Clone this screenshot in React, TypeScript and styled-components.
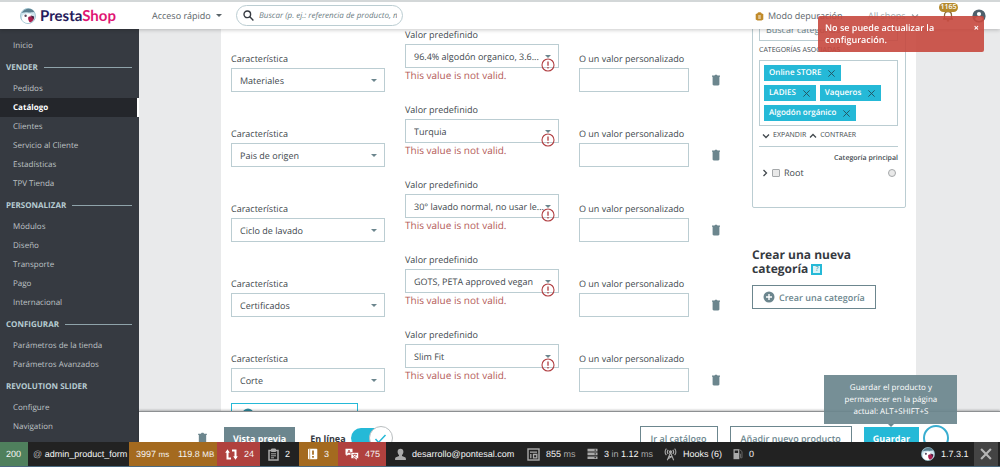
import React from "react";
import styled, { createGlobalStyle, css } from "styled-components";

const c = {
  line: "#bbcdd2",
  text: "#42494e",
  slate: "#6c868e",
  cyan: "#25b9d7",
  danger: "#b45c59",
};

const Global = createGlobalStyle`
  *, *::before, *::after { box-sizing: border-box; }
  html, body { margin: 0; height: 100%; }
  body { font-family: "Open Sans", "Noto Sans", sans-serif; font-size: 9px; color: ${c.text}; background: #fff; text-rendering: geometricPrecision; }
  button, input, select { font-family: inherit; margin: 0; text-rendering: inherit; }
  button { cursor: pointer; }
  svg { display: block; flex: none; }
  a { color: inherit; text-decoration: none; }
`;

const Shell = styled.div`
  height: 100vh;
  display: flex;
  flex-direction: column;
  overflow: hidden;
`;

/* ---------- header ---------- */

const Header = styled.header`
  position: relative;
  z-index: 2;
  flex: none;
  height: 29px;
  display: flex;
  align-items: center;
  padding: 0 14px 0 20px;
  background: #fff;
  border-top: 2px solid #d3d7d8;
  box-shadow: 0 1px 4px rgba(0, 0, 0, 0.22);
`;

const Logo = styled.a`
  display: flex;
  align-items: center;
  gap: 4px;
  width: 132px;
  font-family: Lato, "Open Sans", sans-serif;
  font-size: 15px;
  font-weight: 700;
  line-height: 20px;
  color: #251b5b;
`;

const LogoAccent = styled.span`
  color: #df1574;
`;

const QuickAccess = styled.button`
  display: flex;
  align-items: center;
  gap: 5px;
  width: 84px;
  padding: 0;
  border: 0;
  background: none;
  font-size: 9px;
  line-height: 16px;
  white-space: nowrap;
  color: #5a6368;
`;

const Caret = styled.span`
  border: 3px solid transparent;
  border-top-color: currentColor;
  border-bottom: 0;
`;

const SearchBox = styled.label`
  display: flex;
  align-items: center;
  gap: 5px;
  width: 167px;
  height: 21px;
  padding: 0 5px 0 6px;
  border: 1px solid ${c.line};
  border-radius: 11px;
  color: #363a41;
`;

const SearchInput = styled.input`
  flex: 1;
  min-width: 0;
  padding: 0;
  border: 0;
  outline: 0;
  background: none;
  font-size: 8px;
  font-style: italic;
  &::placeholder { color: #6c7d84; opacity: 1; }
`;

const HeaderTools = styled.div`
  margin-left: auto;
  display: flex;
  align-items: center;
`;

const DebugMode = styled.a`
  display: flex;
  align-items: center;
  gap: 4px;
  width: 113px;
  font-size: 9px;
  white-space: nowrap;
  color: #5a6368;
`;

const ShopPicker = styled.button`
  display: flex;
  align-items: center;
  gap: 5px;
  width: 74px;
  padding: 0;
  border: 0;
  background: none;
  font-size: 9px;
  white-space: nowrap;
  color: #9aa5aa;
`;

const IconButton = styled.button`
  position: relative;
  padding: 0;
  border: 0;
  background: none;
  color: inherit;
`;

const BellButton = styled(IconButton)`
  margin-right: 18px;
  color: #8b6a3b;
`;

const Badge = styled.span`
  position: absolute;
  left: -3px;
  top: -7px;
  width: 19px;
  border-radius: 5px;
  background: #b58a2c;
  color: #fff;
  font-size: 7px;
  font-weight: 600;
  line-height: 9px;
  text-align: center;
`;

const Toast = styled.div`
  position: fixed;
  z-index: 5;
  top: 16px;
  right: 16px;
  width: 166px;
  display: flex;
  align-items: flex-start;
  justify-content: space-between;
  padding: 6px 5px 6px 7px;
  border-radius: 2px;
  background: rgba(199, 72, 62, 0.9);
  color: #fff;
  font-size: 9px;
  font-weight: 600;
  line-height: 12px;
`;

const ToastText = styled.span`
  max-width: 120px;
`;

const ToastClose = styled.button`
  padding: 0;
  border: 0;
  background: none;
  color: #fff;
  font-size: 9px;
  font-weight: 700;
  line-height: 12px;
`;

/* ---------- sidebar ---------- */

const Body = styled.div`
  flex: 1;
  min-height: 0;
  display: flex;
`;

const Sidebar = styled.nav`
  flex: none;
  width: 139px;
  padding-top: 7px;
  overflow: hidden;
  background: #363a41;
`;

const MenuHeading = styled.div<{ $ruled?: boolean }>`
  display: flex;
  align-items: center;
  gap: 6px;
  height: 24px;
  padding: 0 7px 0 6px;
  color: #b7ccd2;
  font-size: 8px;
  font-weight: 700;
  white-space: nowrap;
  ${(p) => p.$ruled && css`
    &::after { content: ""; flex: 1; height: 1px; background: #8fa3aa; }
  `}
`;

const MenuLink = styled.a<{ $active?: boolean }>`
  display: block;
  height: 19px;
  padding-left: 13px;
  border-right: 2px solid transparent;
  color: #bfc3c6;
  font-size: 8px;
  line-height: 19px;
  white-space: nowrap;
  ${(p) => p.$active && css`
    border-right-color: #fff;
    background: #24262b;
    color: #fff;
    font-weight: 700;
  `}
`;

/* ---------- page ---------- */

const Main = styled.main`
  flex: 1;
  min-width: 0;
  display: flex;
  flex-direction: column;
  background: #e9eaeb;
`;

const Viewport = styled.div`
  flex: 1;
  min-height: 0;
  display: flex;
  overflow: hidden;
  padding: 0 84px 0 82px;
`;

const Panel = styled.div`
  flex: 1;
  min-width: 0;
  display: flex;
  align-items: flex-start;
  gap: 29px;
  min-height: 100%;
  padding: 0 10px;
  background: #fff;
`;

const Features = styled.form`
  flex: 1;
  min-width: 0;
  display: grid;
  gap: 11px;
  margin-top: -1px;
`;

const FeatureRow = styled.div`
  display: grid;
  grid-template-columns: 154fr 154fr 110fr 14px;
  column-gap: 20px;
  align-items: end;
  height: 64px;
`;

const Field = styled.div<{ $top?: boolean }>`
  min-width: 0;
  align-self: ${(p) => (p.$top ? "start" : "end")};
`;

const Label = styled.label`
  display: block;
  margin-bottom: 2px;
  font-size: 9px;
  line-height: 14px;
  white-space: nowrap;
`;

const boxed = css`
  display: block;
  width: 100%;
  height: 24px;
  border: 1px solid ${c.line};
  border-radius: 0;
  background: #fff;
  color: ${c.text};
  font-size: 9px;
  outline: 0;
`;

const SelectWrap = styled.div`
  position: relative;
  &::after {
    content: "";
    position: absolute;
    right: 8px;
    top: 11px;
    border: 3px solid transparent;
    border-top-color: ${c.slate};
    border-bottom: 0;
    pointer-events: none;
  }
`;

const Select = styled.select`
  ${boxed}
  appearance: none;
  padding: 0 6px 0 8px;
`;

const TextInput = styled.input`
  ${boxed}
  padding: 0 6px;
`;

const InvalidMark = styled.span`
  position: absolute;
  z-index: 1;
  right: 4px;
  top: 14px;
  color: #b03f42;
`;

const ErrorText = styled.div`
  font-size: 10px;
  line-height: 14px;
  color: ${c.danger};
  white-space: nowrap;
`;

const TrashButton = styled(IconButton)`
  display: flex;
  align-items: center;
  justify-content: center;
  height: 24px;
  color: ${c.slate};
`;

const OutlineButton = styled.button<{ $tone?: "cyan" }>`
  display: flex;
  align-items: center;
  justify-content: center;
  gap: 4px;
  height: 24px;
  padding: 0 10px;
  border: 1px solid ${(p) => (p.$tone ? c.cyan : c.slate)};
  background: #fff;
  color: ${(p) => (p.$tone ? "#2f8da1" : c.slate)};
  font-size: 9px;
  font-weight: 600;
  white-space: nowrap;
`;

const AddFeature = styled(OutlineButton)`
  justify-self: start;
  width: 127px;
  height: 22px;
`;

const Aside = styled.aside`
  flex: none;
  width: 154px;
  margin-top: -20px;
`;

const Card = styled.section`
  display: flex;
  flex-direction: column;
  height: 199px;
  padding: 7px 7px 0 6px;
  border: 1px solid ${c.line};
  border-radius: 2px;
`;

const CategorySearch = styled(TextInput)`
  flex: none;
  font-size: 9px;
  &::placeholder { color: ${c.slate}; opacity: 1; }
`;

const Caption = styled.h2`
  margin: 4px 0 3px;
  font-size: 7px;
  font-weight: 400;
  line-height: 12px;
  white-space: nowrap;
`;

const Tags = styled.ul`
  display: flex;
  flex-wrap: wrap;
  align-content: flex-start;
  gap: 4px;
  height: 66px;
  margin: 0;
  padding: 4px;
  border: 1px solid ${c.line};
  list-style: none;
`;

const Tag = styled.li`
  display: flex;
  align-items: center;
  gap: 6px;
  height: 16px;
  padding: 0 5px;
  background: ${c.cyan};
  color: #fff;
  font-size: 8px;
  font-weight: 600;
  line-height: 16px;
  white-space: nowrap;
`;

const TagClose = styled(IconButton)`
  color: #24505c;
`;

const TreeTools = styled.div`
  display: flex;
  align-items: center;
  gap: 3px;
  height: 21px;
  padding-left: 3px;
  border-bottom: 1px solid ${c.line};
`;

const TreeTool = styled.button`
  display: flex;
  align-items: center;
  gap: 3px;
  padding: 0;
  border: 0;
  background: none;
  color: ${c.text};
  font-size: 7px;
  line-height: 12px;
`;

const MainCategory = styled.div`
  margin-top: 5px;
  font-size: 7px;
  font-weight: 600;
  line-height: 14px;
  text-align: right;
`;

const TreeRow = styled.div`
  display: flex;
  align-items: center;
  gap: 3px;
  height: 14px;
  padding: 0 2px 0 2px;
`;

const TreeLabel = styled.label`
  flex: 1;
  display: flex;
  align-items: center;
  gap: 4px;
  font-size: 9px;
  line-height: 14px;
`;

const Tick = styled.input<{ $round?: boolean }>`
  appearance: none;
  width: 8px;
  height: 8px;
  border: 1px solid #a5a8aa;
  border-radius: ${(p) => (p.$round ? "50%" : "1px")};
  background: #e9e9e9;
`;

const NewCategory = styled.h2`
  display: block;
  margin: 40px 0 9px;
  color: #363a41;
  font-size: 12px;
  font-weight: 700;
  line-height: 14px;
`;

const Help = styled.button`
  display: inline-block;
  width: 11px;
  height: 11px;
  padding: 0;
  border: 2px solid ${c.cyan};
  background: #d9f3f8;
  color: #2f8da1;
  font-size: 7px;
  line-height: 7px;
  vertical-align: middle;
`;

/* ---------- action bar ---------- */

const ActionBar = styled.footer`
  position: relative;
  z-index: 1;
  flex: none;
  display: flex;
  align-items: flex-start;
  justify-content: space-between;
  height: 31px;
  padding: 15px 51px 0 57px;
  border-top: 1px solid #8d9092;
  background: #fff;
  box-shadow: 0 -1px 2px rgba(0, 0, 0, 0.25);
`;

const ActionGroup = styled.div<{ $gap: number }>`
  display: flex;
  align-items: center;
  gap: ${(p) => p.$gap}px;
  height: 22px;
  color: ${c.slate};
`;

const SolidButton = styled.button<{ $color: string }>`
  height: 22px;
  padding: 0 9px;
  border: 0;
  background: ${(p) => p.$color};
  color: #fff;
  font-size: 9px;
  font-weight: 700;
  white-space: nowrap;
`;

const OnlineLabel = styled.label`
  display: flex;
  align-items: center;
  gap: 5px;
  color: #363a41;
  font-size: 9px;
  font-weight: 700;
`;

const SwitchInput = styled.input`
  appearance: none;
  position: relative;
  width: 34px;
  height: 20px;
  margin: 0;
  border-radius: 10px;
  background: ${c.cyan};
`;

const SwitchWrap = styled.span`
  position: relative;
  display: flex;
  width: 42px;
`;

const Knob = styled.span`
  position: absolute;
  right: 0;
  top: -2px;
  display: flex;
  align-items: center;
  justify-content: center;
  width: 24px;
  height: 24px;
  border: 1px solid #b9bec0;
  border-radius: 50%;
  background: #fff;
  color: ${c.cyan};
`;

const SaveSlot = styled.span`
  position: relative;
  display: flex;
`;

const Tooltip = styled.div`
  position: absolute;
  z-index: 3;
  left: 50%;
  bottom: 25px;
  width: 133px;
  margin-left: -67px;
  padding: 7px 16px 6px;
  background: rgba(108, 134, 142, 0.93);
  color: #fff;
  font-size: 8px;
  line-height: 12px;
  text-align: center;
  &::after {
    content: "";
    position: absolute;
    left: 50%;
    top: 100%;
    margin-left: -3px;
    border: 3px solid transparent;
    border-top-color: ${c.slate};
    border-bottom: 0;
  }
`;

const Spinner = styled.span`
  width: 26px;
  height: 26px;
  margin-left: -8px;
  border: 2px solid #3aaed0;
  border-radius: 50%;
`;

/* ---------- debug toolbar ---------- */

const DebugBar = styled.div`
  position: relative;
  z-index: 4;
  flex: none;
  display: flex;
  height: 24px;
  padding-right: 2px;
  background: #222;
  color: #f5f5f5;
  font-family: "Liberation Sans", Arial, sans-serif;
  font-size: 9px;
  line-height: 24px;
  white-space: nowrap;
`;

const Block = styled.div<{ $bg?: string; $w: number; $pad?: number }>`
  flex: none;
  display: flex;
  align-items: center;
  gap: 6px;
  width: ${(p) => p.$w}px;
  padding-left: ${(p) => p.$pad ?? 8}px;
  background: ${(p) => p.$bg ?? "transparent"};
`;

const Unit = styled.span`
  color: #aaa;
`;

const Muted = styled.span`
  font-size: 8px;
`;

const DebugEnd = styled.div`
  margin-left: auto;
  display: flex;
`;

const CloseBar = styled.button`
  display: flex;
  align-items: center;
  justify-content: center;
  width: 24px;
  padding: 0;
  border: 0;
  background: #444;
  color: #b5b5b5;
`;

const Strip = styled.div`
  flex: none;
  height: 1px;
  background: #4b6a80;
`;

/* ---------- icons ---------- */

const Mascot = ({ size }: { size: number }) => (
  <svg width={size} height={size} viewBox="0 0 16 16" aria-hidden="true">
    <circle cx="8" cy="8" r="7.5" fill="#cfe6ee" stroke="#8fb9c6" strokeWidth=".8" />
    <path d="M1.800 5C3.500 1.800 6 .8 8.500.8c2.500 0 4.700 1.200 5.800 3.200-2.500.200-4 .6-6 .4-2.500-.2-4.500-.2-6.500.6z" fill="#5b7f8f" />
    <path d="M2.200 12C1.500 8.500 3 6 6.500 5.600c3.500-.4 6 1 6.800 4.400-.5 3-2.600 5-5.300 5-2.500 0-4.600-1-5.800-3z" fill="#fff" />
    <circle cx="5.600" cy="7.800" r="1.200" fill="#574d60" />
    <path d="M8.300 9c1.700-1.300 4.300-.8 5.700.6-.3 2.500-1.700 4.300-3.900 5C8.500 13.200 7.800 11 8.300 9z" fill="#a8204f" />
    <path d="M10.500 7.200l3.600 1.400-.6 2.800z" fill="#4a2040" />
  </svg>
);

const Trash = ({ size = 12 }: { size?: number }) => (
  <svg width={size} height={size} viewBox="0 0 12 12" fill="currentColor" aria-hidden="true">
    <path d="M2 1.500h2.500l.7-.8h1.600l.7.8H10v1.300H2zM2.600 2.600h6.800v7.600c0 .7-.5 1.200-1.200 1.200H3.800c-.7 0-1.200-.5-1.200-1.200z" />
  </svg>
);

const Alert = () => (
  <svg width="14" height="14" viewBox="0 0 14 14" fill="none" stroke="currentColor" aria-hidden="true">
    <circle cx="7" cy="7" r="6" strokeWidth="1.100" />
    <path d="M7 3.500v4.300M7 9v1.400" strokeWidth="1.300" />
  </svg>
);

const Cross = ({ size, weight = 1 }: { size: number; weight?: number }) => (
  <svg width={size} height={size} viewBox="0 0 10 10" stroke="currentColor" strokeWidth={weight} aria-hidden="true">
    <path d="M1.500 1.500l7 7M8.500 1.500l-7 7" />
  </svg>
);

const Chevron = ({ dir }: { dir: "down" | "up" | "right" }) => (
  <svg width="8" height="8" viewBox="0 0 8 8" fill="none" stroke="currentColor" strokeWidth="1.300" aria-hidden="true">
    <path d={{ down: "M1 2.500l3 3 3-3", up: "M1 5.500l3-3 3 3", right: "M2.500 1l3 3-3 3" }[dir]} />
  </svg>
);

const Plus = () => (
  <svg width="12" height="12" viewBox="0 0 12 12" aria-hidden="true">
    <circle cx="6" cy="6" r="5.500" fill="currentColor" />
    <path d="M6 3v6M3 6h6" stroke="#fff" strokeWidth="1.400" />
  </svg>
);

const Magnifier = () => (
  <svg width="11" height="11" viewBox="0 0 11 11" fill="none" stroke="currentColor" strokeWidth="1.400" aria-hidden="true">
    <circle cx="4.300" cy="4.300" r="3.300" />
    <path d="M6.800 6.800l3.600 3.600" />
  </svg>
);

const Bug = () => (
  <svg width="9" height="10" viewBox="0 0 9 10" aria-hidden="true">
    <path d="M2.300 2.600C2.500.8 6.500.8 6.700 2.600L8.300 3v5.500L6.500 9.500h-4L.7 8.500V3z" fill="#c08a2a" />
    <path d="M3.200 5h2.600M3.200 7h2.600" stroke="#fff" />
  </svg>
);

const Bell = () => (
  <svg width="12" height="12" viewBox="0 0 12 12" fill="none" stroke="currentColor" strokeWidth="1.300" aria-hidden="true">
    <path d="M2.500 8.800V5.200C2.500 3 4 1.500 6 1.500S9.500 3 9.500 5.200v3.600M1 9h10" />
    <path d="M4.800 10.800h2.400" />
  </svg>
);

const Account = () => (
  <svg width="14" height="14" viewBox="0 0 14 14" aria-hidden="true">
    <circle cx="7" cy="7" r="6.600" fill="#4f5f6b" />
    <circle cx="7" cy="5" r="2.100" fill="#fff" />
    <path d="M3 10c.8-1.700 2.200-2.300 4-2.300s3.200.6 4 2.300c-1 1.300-2.400 2-4 2s-3-.7-4-2z" fill="#fff" />
  </svg>
);

const Swap = () => (
  <svg width="13" height="13" viewBox="0 0 13 13" fill="none" stroke="#fff" strokeWidth="2" aria-hidden="true">
    <path d="M6 10.500H2.500V3M7 2.500h3.500V10" />
    <path d="M.2 4.800L2.500 1.200 4.800 4.800zM8.200 8.200l2.300 3.600 2.300-3.600z" fill="#fff" stroke="none" />
  </svg>
);

const Clipboard = () => (
  <svg width="11" height="13" viewBox="0 0 11 13" fill="none" stroke="#aaa" aria-hidden="true">
    <path d="M1 2.500h9v9.500H1z" strokeWidth="1.500" />
    <path d="M3.500 1h4v2.500h-4z" fill="#aaa" />
    <path d="M3 5.800h5M3 7.800h5M3 9.800h3" />
  </svg>
);

const LogMark = () => (
  <svg width="11" height="12" viewBox="0 0 11 12" aria-hidden="true">
    <path d="M1 1.500C1 1 1.300.7 1.800.7H9.500c.5 0 .8.300.8.800v9c0 .5-.3.800-.8.800H1.800c-.5 0-.8-.3-.8-.8z" fill="#fff" />
    <path d="M6 2.400v4.300M6 8v1.700" stroke="#a46a1f" strokeWidth="1.700" />
    <path d="M2.700 1v10" stroke="#a46a1f" strokeWidth=".6" />
  </svg>
);

const Translate = () => (
  <svg width="14" height="13" viewBox="0 0 14 13" aria-hidden="true">
    <path d="M.5.800h7v6H3L1.500 8.300V6.800h-1z" fill="#fff" />
    <path d="M2.500 5.300L4 2l1.500 3.300M3 4.300h2" stroke="#b0413e" fill="none" strokeWidth=".8" />
    <path d="M6 4.500h7.500v6h-1.500v2l-2-2H6z" fill="#fff" stroke="#b0413e" strokeWidth=".6" />
    <path d="M7.500 6.500H12M9.800 5.500v1M8 9.500c2-.6 3-1.500 3.300-3M8.300 7c.5 1.300 1.800 2.200 3.200 2.500" stroke="#b0413e" fill="none" strokeWidth=".7" />
  </svg>
);

const Person = () => (
  <svg width="11" height="13" viewBox="0 0 11 13" fill="#aaa" aria-hidden="true">
    <path d="M5.500.800c1.900 0 2.900 1.300 2.900 3 0 1.300-.6 2.600-1.400 3.200v1l3 1.200c.6.300.9.800.9 1.500v1.300H.1v-1.300c0-.7.3-1.200.9-1.500L4 8V7c-.8-.6-1.400-1.900-1.400-3.200 0-1.700 1-3 2.900-3z" />
  </svg>
);

const TemplateIcon = () => (
  <svg width="13" height="13" viewBox="0 0 13 13" fill="none" stroke="#aaa" aria-hidden="true">
    <rect x="1" y="1" width="11" height="11" strokeWidth="1.400" />
    <path d="M3 4.200h7M3.800 6v4.200M6.500 6.500h3.300v3.300H6.500z" strokeWidth="1.300" />
  </svg>
);

const Database = () => (
  <svg width="11" height="12" viewBox="0 0 11 12" aria-hidden="true">
    <path d="M.5.800h10v2.700H.5zM.5 4.600h10v2.700H.5zM.5 8.400h10v2.700H.5z" fill="#aaa" />
    <path d="M7.500 2.100H9M7.500 5.900H9M7.500 9.700H9" stroke="#222" />
  </svg>
);

const Antenna = () => (
  <svg width="13" height="13" viewBox="0 0 13 13" fill="none" stroke="#aaa" strokeWidth="1.100" aria-hidden="true">
    <path d="M6.500 4.500L3.300 12.300M6.500 4.500l3.200 7.800M5 8.500h3M4 10.800l4-2.300" />
    <circle cx="6.500" cy="3.800" r="1" fill="#aaa" />
    <path d="M4.200 1.800c-1 1.200-1 3 0 4.200M8.800 1.800c1 1.200 1 3 0 4.200M2.400.600C.7 2.400.7 5.400 2.400 7.200M10.600.600c1.700 1.800 1.700 4.800 0 6.600" />
  </svg>
);

const Pump = () => (
  <svg width="10" height="12" viewBox="0 0 10 12" aria-hidden="true">
    <path d="M.5 1.200h5.800v10H.5z" fill="#aaa" />
    <path d="M1.700 2.500h3.400V5H1.700z" fill="#222" />
    <path d="M6.500 1.500L9 3.500v6.300H7.500V6H6.300" fill="none" stroke="#666" />
  </svg>
);

/* ---------- data ---------- */

const menu = [
  { title: "VENDER", ruled: true, items: ["Pedidos", "Catálogo", "Clientes", "Servicio al Cliente", "Estadísticas", "TPV Tienda"] },
  { title: "PERSONALIZAR", ruled: true, items: ["Módulos", "Diseño", "Transporte", "Pago", "Internacional"] },
  { title: "CONFIGURAR", ruled: true, items: ["Parámetros de la tienda", "Parámetros Avanzados"] },
  { title: "REVOLUTION SLIDER", ruled: false, items: ["Configure", "Navigation"] },
];

const features = [
  ["Materiales", "96.4% algodón organico, 3.6..."],
  ["Pais de origen", "Turquia"],
  ["Ciclo de lavado", "30° lavado normal, no usar le..."],
  ["Certificados", "GOTS, PETA approved vegan"],
  ["Corte", "Slim Fit"],
];

const tags = ["Online STORE", "LADIES", "Vaqueros", "Algodón orgánico"];

export default function App() {
  return (
    <Shell>
      <Global />
      <Header>
        <Logo href="#">
          <Mascot size={16} />
          <span>Presta<LogoAccent>Shop</LogoAccent></span>
        </Logo>
        <QuickAccess type="button">Acceso rápido <Caret /></QuickAccess>
        <SearchBox>
          <Magnifier />
          <SearchInput aria-label="Buscar" placeholder="Buscar (p. ej.: referencia de producto, nombre)" />
        </SearchBox>
        <HeaderTools>
          <DebugMode href="#"><Bug /> Modo depuración</DebugMode>
          <ShopPicker type="button">All shops <Chevron dir="down" /></ShopPicker>
          <BellButton type="button" aria-label="Notificaciones">
            <Bell />
            <Badge>1165</Badge>
          </BellButton>
          <IconButton type="button" aria-label="Cuenta"><Account /></IconButton>
        </HeaderTools>
      </Header>
      <Toast role="alert">
        <ToastText>No se puede actualizar la configuración.</ToastText>
        <ToastClose type="button" aria-label="Cerrar">×</ToastClose>
      </Toast>

      <Body>
        <Sidebar>
          <MenuLink href="#">Inicio</MenuLink>
          {menu.map((s) => (
            <React.Fragment key={s.title}>
              <MenuHeading $ruled={s.ruled}>{s.title}</MenuHeading>
              {s.items.map((i) => (
                <MenuLink key={i} href="#" $active={i === "Catálogo"}>{i}</MenuLink>
              ))}
            </React.Fragment>
          ))}
        </Sidebar>

        <Main>
          <Viewport>
            <Panel>
              <Features>
                {features.map(([name, value], n) => (
                  <FeatureRow key={name}>
                    <Field>
                      <Label htmlFor={`feature-${n}`}>Característica</Label>
                      <SelectWrap>
                        <Select id={`feature-${n}`}><option>{name}</option></Select>
                      </SelectWrap>
                    </Field>
                    <Field $top>
                      <Label htmlFor={`value-${n}`}>Valor predefinido</Label>
                      <SelectWrap>
                        <Select id={`value-${n}`}><option>{value}</option></Select>
                        <InvalidMark><Alert /></InvalidMark>
                      </SelectWrap>
                      <ErrorText>This value is not valid.</ErrorText>
                    </Field>
                    <Field>
                      <Label htmlFor={`custom-${n}`}>O un valor personalizado</Label>
                      <TextInput id={`custom-${n}`} />
                    </Field>
                    <TrashButton type="button" aria-label="Eliminar"><Trash /></TrashButton>
                  </FeatureRow>
                ))}
                <AddFeature type="button" $tone="cyan"><Plus /> Añadir característica</AddFeature>
              </Features>

              <Aside>
                <Card>
                  <CategorySearch aria-label="Buscar categorías" placeholder="Buscar categorías" />
                  <Caption>CATEGORÍAS ASOCIADAS</Caption>
                  <Tags>
                    {tags.map((t) => (
                      <Tag key={t}>
                        {t}
                        <TagClose type="button" aria-label={`Quitar ${t}`}><Cross size={9} /></TagClose>
                      </Tag>
                    ))}
                  </Tags>
                  <TreeTools>
                    <TreeTool type="button"><Chevron dir="down" /> EXPANDIR</TreeTool>
                    <TreeTool type="button"><Chevron dir="up" /> CONTRAER</TreeTool>
                  </TreeTools>
                  <MainCategory>Categoría principal</MainCategory>
                  <TreeRow>
                    <Chevron dir="right" />
                    <TreeLabel><Tick type="checkbox" /> Root</TreeLabel>
                    <Tick type="radio" $round aria-label="Root como categoría principal" />
                  </TreeRow>
                </Card>
                <NewCategory>
                  Crear una nueva categoría <Help type="button" aria-label="Ayuda">?</Help>
                </NewCategory>
                <OutlineButton type="button"><Plus /> Crear una categoría</OutlineButton>
              </Aside>
            </Panel>
          </Viewport>

          <ActionBar>
            <ActionGroup $gap={15}>
              <IconButton type="button" aria-label="Eliminar producto"><Trash size={13} /></IconButton>
              <SolidButton type="button" $color={c.slate}>Vista previa</SolidButton>
              <OnlineLabel>
                En línea
                <SwitchWrap>
                  <SwitchInput type="checkbox" role="switch" defaultChecked />
                  <Knob>
                    <svg width="13" height="13" viewBox="0 0 13 13" fill="none" stroke="currentColor" strokeWidth="1.500" aria-hidden="true">
                      <path d="M1.500 7l3 3.500L11.500 3" />
                    </svg>
                  </Knob>
                </SwitchWrap>
              </OnlineLabel>
            </ActionGroup>
            <ActionGroup $gap={12}>
              <OutlineButton type="button">Ir al catálogo</OutlineButton>
              <OutlineButton type="button">Añadir nuevo producto</OutlineButton>
              <SaveSlot>
                <SolidButton type="button" $color={c.cyan}>Guardar</SolidButton>
                <Tooltip role="tooltip">Guardar el producto y permanecer en la página actual: ALT+SHIFT+S</Tooltip>
              </SaveSlot>
              <Spinner />
            </ActionGroup>
          </ActionBar>
        </Main>
      </Body>

      <DebugBar>
        <Block $w={28} $pad={6} $bg="#4f805d">200</Block>
        <Block $w={101} $pad={5}><span><Unit>@</Unit> admin_product_form</span></Block>
        <Block $w={42} $pad={7} $bg="#a46a1f"><span>3997 <Muted>ms</Muted></span></Block>
        <Block $w={46} $pad={7} $bg="#a46a1f"><span>119.8 <Muted>MB</Muted></span></Block>
        <Block $w={43} $bg="#b0413e"><Swap />24</Block>
        <Block $w={39}><Clipboard />2</Block>
        <Block $w={39} $bg="#a46a1f"><LogMark />3</Block>
        <Block $w={48} $pad={7} $bg="#b0413e"><Translate />475</Block>
        <Block $w={133} $pad={9}><Person />desarrollo@pontesal.com</Block>
        <Block $w={60}><TemplateIcon /><span>855 <Unit>ms</Unit></span></Block>
        <Block $w={77}><Database /><span>3 <Unit>in</Unit> 1.12 <Unit>ms</Unit></span></Block>
        <Block $w={69}><Antenna />Hooks (6)</Block>
        <Block $w={40}><Pump />0</Block>
        <DebugEnd>
          <Block $w={53} $pad={0}><Mascot size={14} />1.7.3.1</Block>
          <CloseBar type="button" aria-label="Cerrar barra"><Cross size={14} weight={1.5} /></CloseBar>
        </DebugEnd>
      </DebugBar>
      <Strip />
    </Shell>
  );
}
